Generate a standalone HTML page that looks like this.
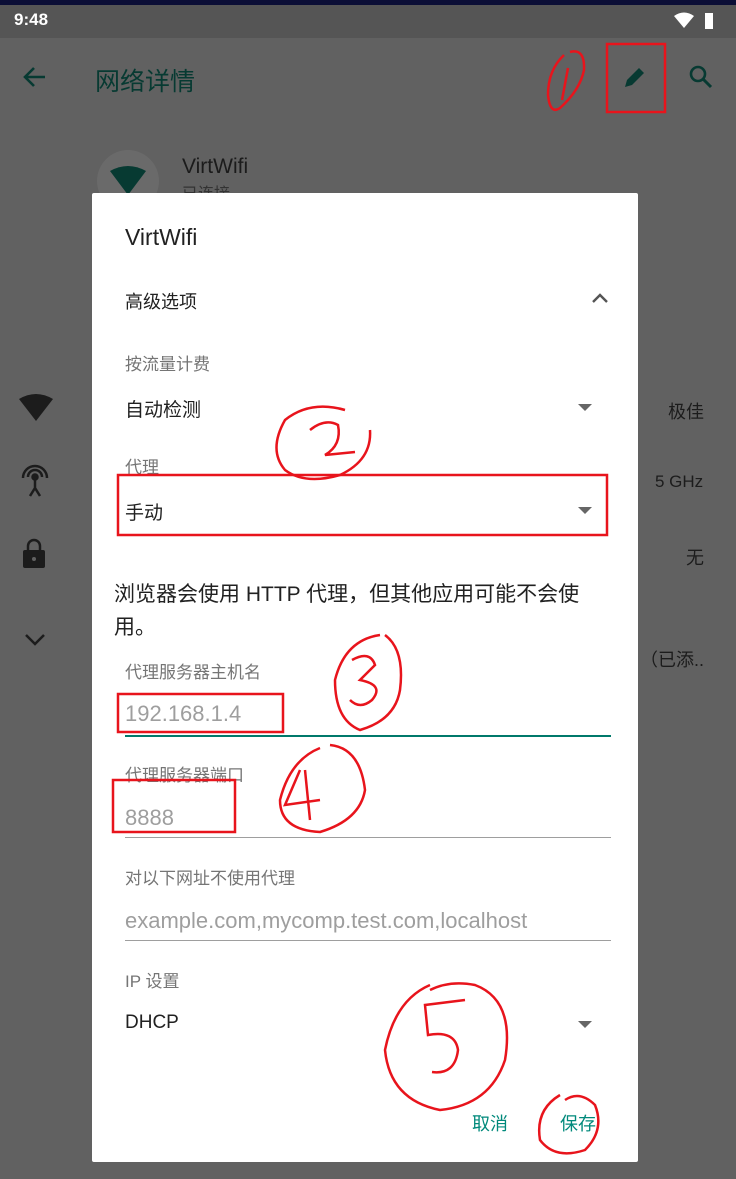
<!DOCTYPE html>
<html><head><meta charset="utf-8"><style>
*{margin:0;padding:0;box-sizing:border-box}
body{width:736px;height:1179px;background:#616161;position:relative;overflow:hidden;font-family:"Liberation Sans","Noto Sans CJK SC",sans-serif}
.a{position:absolute;white-space:nowrap}
.dlg{position:absolute;left:92px;top:193px;width:546px;height:969px;background:#fff;border-radius:2px}
.lbl{color:#757575;font-size:17px}
.val{color:#212121;font-size:19px}
.tri{position:absolute;width:0;height:0;border-left:7px solid transparent;border-right:7px solid transparent;border-top:7px solid #666}
.line{position:absolute;left:33px;width:486px;height:1px;background:#9e9e9e}
.ph{color:#9e9e9e;font-size:22px}
</style></head><body>
<div class="a" style="left:0;top:0;width:736px;height:5px;background:#0b0e36"></div>
<div class="a" style="left:0;top:5px;width:736px;height:33px;background:#555"></div>
<div class="a" style="left:14px;top:10px;color:#fff;font-size:17px;font-weight:bold">9:48</div>
<svg class="a" style="left:672px;top:12px" width="46" height="18"><path d="M2 4Q12-3 22 4L12 16Z" fill="#fff"/><rect x="33" y="1" width="8" height="16" fill="#fff"/></svg>
<svg class="a" style="left:20px;top:62px" width="30" height="30"><path d="M25 15H5M14 6L5 15L14 24" stroke="#073a32" stroke-width="2.6" fill="none"/></svg>
<div class="a" style="left:95px;top:62px;color:#073a32;font-size:25px">网络详情</div>
<svg class="a" style="left:620px;top:62px" width="30" height="30"><path d="M5 25L7 18L19 6L24 11L12 23Z" fill="#073a32"/></svg>
<svg class="a" style="left:686px;top:62px" width="30" height="30"><circle cx="12" cy="12" r="7" stroke="#073a32" stroke-width="2.6" fill="none"/><path d="M17 17L25 25" stroke="#073a32" stroke-width="3"/></svg>
<div class="a" style="left:97px;top:150px;width:62px;height:62px;border-radius:50%;background:#6a6a6a"></div>
<svg class="a" style="left:108px;top:165px" width="40" height="30"><path d="M2 6Q20-4 38 6L20 30Z" fill="#073a32"/></svg>
<div class="a" style="left:182px;top:155px;color:#1b1b1b;font-size:21px">VirtWifi</div>
<div class="a" style="left:182px;top:180px;color:#333;font-size:16px">已连接</div>
<svg class="a" style="left:18px;top:393px" width="36" height="28"><path d="M1 6Q18-4 35 6L18 28Z" fill="#1c1c1c"/></svg>
<svg class="a" style="left:18px;top:462px" width="34" height="36" fill="none" stroke="#1c1c1c" stroke-width="2.5"><path d="M5 16A12 12 0 1 1 29 16M10 15A7 7 0 1 1 24 15"/><circle cx="17" cy="15" r="2.5" fill="#1c1c1c"/><path d="M17 17V26M12 34L17 26L22 34"/></svg>
<svg class="a" style="left:22px;top:537px" width="24" height="32"><path d="M6 13V9A6 6 0 0 1 18 9V13" stroke="#1c1c1c" stroke-width="2.5" fill="none"/><rect x="1" y="13" width="22" height="18" rx="2" fill="#1c1c1c"/><circle cx="12" cy="22" r="2" fill="#616161"/></svg>
<svg class="a" style="left:24px;top:632px" width="22" height="16"><path d="M2 3L11 12L20 3" stroke="#1c1c1c" stroke-width="2.5" fill="none"/></svg>
<div class="a" style="left:668px;top:398px;color:#1c1c1c;font-size:18px">极佳</div>
<div class="a" style="left:655px;top:472px;color:#1c1c1c;font-size:17px">5 GHz</div>
<div class="a" style="left:686px;top:544px;color:#1c1c1c;font-size:18px">无</div>
<div class="a" style="left:640px;top:646px;color:#1c1c1c;font-size:18px">（已添..</div>

<div class="dlg">
<div class="a" style="left:33px;top:31px;color:#212121;font-size:23px">VirtWifi</div>
<div class="a" style="left:33px;top:95px;color:#212121;font-size:18px">高级选项</div>
<svg class="a" style="left:498px;top:98px" width="20" height="14"><path d="M3 11L10 4L17 11" stroke="#555" stroke-width="2.4" fill="none"/></svg>
<div class="a lbl" style="left:33px;top:157px">按流量计费</div>
<div class="a val" style="left:33px;top:202px">自动检测</div>
<div class="tri" style="left:486px;top:211px"></div>
<div class="a lbl" style="left:33px;top:260px">代理</div>
<div class="a val" style="left:33px;top:305px">手动</div>
<div class="tri" style="left:486px;top:314px"></div>
<div class="a" style="left:22px;top:385px;color:#212121;font-size:21px;line-height:33px;white-space:normal;width:492px">浏览器会使用 HTTP 代理，但其他应用可能不会使用。</div>
<div class="a lbl" style="left:33px;top:465px">代理服务器主机名</div>
<div class="a ph" style="left:33px;top:508px">192.168.1.4</div>
<div class="line" style="top:542px;height:2px;background:#00796b"></div>
<div class="a lbl" style="left:33px;top:568px">代理服务器端口</div>
<div class="a ph" style="left:33px;top:612px">8888</div>
<div class="line" style="top:644px"></div>
<div class="a lbl" style="left:33px;top:671px">对以下网址不使用代理</div>
<div class="a ph" style="left:33px;top:715px">example.com,mycomp.test.com,localhost</div>
<div class="line" style="top:747px"></div>
<div class="a lbl" style="left:33px;top:774px">IP 设置</div>
<div class="a val" style="left:33px;top:819px">DHCP</div>
<div class="tri" style="left:486px;top:828px"></div>
<div class="a" style="left:380px;top:917px;color:#00897b;font-size:18px">取消</div>
<div class="a" style="left:468px;top:917px;color:#00897b;font-size:18px">保存</div>
</div>

<svg class="a" style="left:0;top:0" width="736" height="1179" fill="none" stroke="#e8141c" stroke-width="2.5">
<rect x="607" y="44" width="58" height="68"/>
<path d="M564 55Q548 70 548 95Q550 115 560 108Q580 90 584 70Q585 48 570 52M568 68L562 100"/>
<rect x="118" y="475" width="489" height="60"/>
<path d="M345 410Q310 400 285 420Q268 450 285 470Q305 485 340 475Q372 460 370 430M310 430Q325 418 338 425Q342 445 325 455L355 452"/>
<rect x="118" y="694" width="165" height="38"/>
<path d="M380 635Q345 640 335 680Q335 720 360 730Q395 720 400 690Q405 650 385 635M352 660Q370 650 375 665L360 680Q385 685 372 700Q360 710 350 700"/>
<rect x="113" y="780" width="122" height="52"/>
<path d="M320 748Q290 760 280 800Q280 830 320 832Q360 820 365 790Q360 748 330 745M300 770L285 805L320 800M305 770L310 820"/>
<path d="M430 985Q395 1000 385 1050Q390 1100 440 1110Q490 1105 505 1060Q515 1000 475 985Q450 980 430 990M465 1000L425 1005L428 1035Q455 1030 458 1050Q455 1075 432 1072"/>
<path d="M560 1095Q535 1110 540 1140Q555 1160 585 1150Q605 1130 595 1105Q580 1090 565 1100"/>
</svg>
</body></html>
